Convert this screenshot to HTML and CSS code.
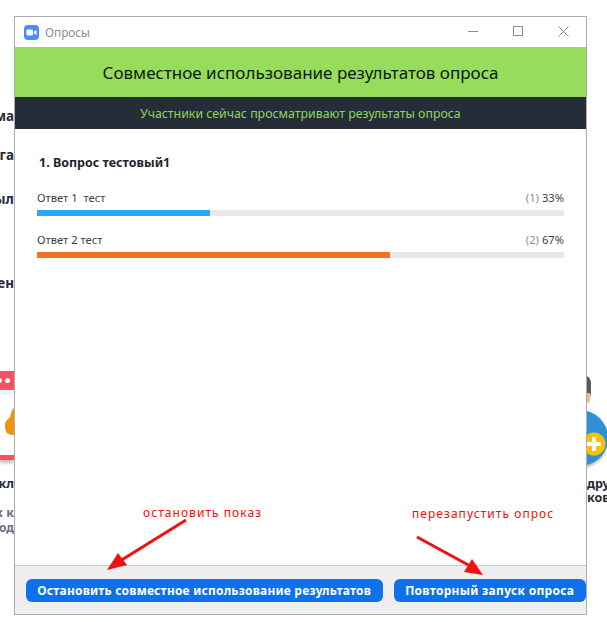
FILE: index.html
```html
<!DOCTYPE html>
<html lang="ru">
<head>
<meta charset="utf-8">
<title>Опросы</title>
<link rel="stylesheet" href="styles.css">
</head>
<body>
<div class="desktop">
  <div class="bg-text bt1">ма</div>
  <div class="bg-text bt2">га</div>
  <div class="bg-text bt3">ыл</div>
  <div class="bg-text bt4">ден</div>
  <div class="bg-card">
    <div class="bg-card-top"><i class="dot d1"></i><i class="dot d2"></i></div>
    <div class="bg-card-strip"></div>
    <svg class="bg-thumb" width="14" height="28" viewBox="0 0 14 28"><path d="M14 0C12 1 11 5 10 9C8 12 5 12 5 18C5 25 8 27 14 27z" fill="#f0930e"/></svg>
    <div class="bg-card-line"></div>
  </div>
  <div class="bg-text bt5">дкл</div>
  <div class="bg-text bt6">к к</div>
  <div class="bg-text bt7">лод</div>
  <div class="bg-head"></div>
  <div class="bg-neck"></div>
  <div class="bg-blue"></div>
  <div class="bg-plus">
    <svg width="24" height="24" viewBox="0 0 24 24"><circle cx="12" cy="12" r="11.500" fill="#f8c105"/><path d="M12 5v14M5 12h14" stroke="#fff" stroke-width="4"/></svg>
  </div>
  <div class="bg-text bt8">дру</div>
  <div class="bg-text bt9">ков</div>

  <section class="window">
    <header class="titlebar">
      <svg class="logo" width="15" height="15" viewBox="0 0 15 15"><rect width="15" height="15" rx="4" fill="#4a8cff"/><rect x="2.500" y="4.500" width="6.500" height="6" rx="1.300" fill="#fff"/><path d="M9.800 6.800l2.700-1.900v5.200l-2.700-1.900z" fill="#fff"/></svg>
      <span class="title">Опросы</span>
      <div class="controls">
        <svg width="10" height="10" viewBox="0 0 10 10"><path d="M0 5.500h10" stroke="#8c8c8c"/></svg>
        <svg width="10" height="10" viewBox="0 0 10 10"><rect x=".5" y=".5" width="9" height="9" fill="none" stroke="#8c8c8c"/></svg>
        <svg width="11" height="11" viewBox="0 0 11 11"><path d="M.5.500l10 10M10.500.500l-10 10" stroke="#8c8c8c"/></svg>
      </div>
    </header>
    <div class="banner">Совместное использование результатов опроса</div>
    <div class="notice">Участники сейчас просматривают результаты опроса</div>
    <main class="results">
      <h2 class="question">1. Вопрос тестовый1</h2>
      <div class="answer">
        <div class="answer-head"><span>Ответ 1&nbsp; тест</span><span><span class="count">(1)</span> 33%</span></div>
        <div class="track"><div class="fill fill-blue" style="width:32.800%"></div></div>
      </div>
      <div class="answer">
        <div class="answer-head"><span>Ответ 2 тест</span><span><span class="count">(2)</span> 67%</span></div>
        <div class="track"><div class="fill fill-orange" style="width:67%"></div></div>
      </div>
    </main>
    <footer class="footer">
      <button class="btn btn-stop">Остановить совместное использование результатов</button>
      <button class="btn btn-restart">Повторный запуск опроса</button>
    </footer>
  </section>

  <div class="note note1">остановить показ</div>
  <div class="note note2">перезапустить опрос</div>
  <svg class="arrows" width="607" height="622" viewBox="0 0 607 622">
    <path d="M186 520L120 561" stroke="#f01010" stroke-width="3"/>
    <path d="M107 570L118 553L127 565z" fill="#f01010"/>
    <path d="M417 537L472 567" stroke="#f01010" stroke-width="3"/>
    <path d="M483 575L464 572L472 559z" fill="#f01010"/>
  </svg>
</div>
</body>
</html>
```
FILE: styles.css
```css
html, body { margin: 0; padding: 0; background: #fff; }
.desktop { position: relative; width: 607px; height: 622px; overflow: hidden; font-family: "Noto Sans", "Open Sans", sans-serif; }

.bg-text { position: absolute; font-weight: 700; font-size: 13.500px; line-height: 14px; color: #2b2b33; white-space: nowrap; }
.bt1 { right: 593px; top: 109px; }
.bt2 { right: 593px; top: 148px; }
.bt3 { right: 593px; top: 192px; }
.bt4 { right: 593px; top: 276px; }
.bt5 { right: 593px; top: 477px; font-size: 12.500px; }
.bt6 { right: 593px; top: 506px; color: #70707c; font-size: 12.500px; }
.bt7 { right: 593px; top: 521px; color: #70707c; font-size: 12px; }
.bt8 { left: 587px; top: 477px; font-size: 12.500px; }
.bt9 { left: 587px; top: 491px; font-size: 12.500px; }

.bg-card { position: absolute; left: 0; top: 371px; width: 14px; height: 89px; box-shadow: 0 3px 3px rgba(0,0,0,.25); background: #fff; }
.bg-card-top { height: 19px; background: #fb5060; position: relative; }
.dot { position: absolute; top: 7px; width: 5px; height: 5px; border-radius: 50%; background: #fff; }
.d1 { left: -3px; }
.d2 { left: 5px; }
.bg-card-strip { height: 5px; background: #eef5fb; }
.bg-thumb { position: absolute; left: 0; top: 37px; }
.bg-card-line { position: absolute; left: 0; right: 0; bottom: 0; height: 5px; background: #f8505c; }
.bg-head { position: absolute; left: 580px; top: 375px; width: 11px; height: 26px; border-radius: 0 8px 8px 0; background: #5a5a5a; }
.bg-neck { position: absolute; left: 586px; top: 393px; width: 4px; height: 10px; border-radius: 0 0 3px 0; background: #e8c07a; }
.bg-blue { position: absolute; left: 552px; top: 410px; width: 56px; height: 56px; border-radius: 50%; background: #2e90d6; box-shadow: 0 2px 3px rgba(0,0,0,.3); }
.bg-plus { position: absolute; left: 582px; top: 432px; width: 24px; height: 24px; }

.window { position: absolute; left: 14px; top: 16px; width: 571px; height: 597px; border: 1px solid #adadad; background: #fff; display: flex; flex-direction: column; }
.titlebar { height: 30px; flex: none; display: flex; align-items: center; padding-left: 9px; background: #fff; }
.logo { flex: none; }
.title { margin-left: 6px; font-size: 11.800px; color: #8a8f99; }
.controls { margin-left: auto; display: flex; align-items: center; gap: 35px; padding: 0 17px 2px 0; }
.controls svg { display: block; }
.banner { height: 50px; flex: none; display: flex; align-items: center; justify-content: center; background: #97dc5a; color: #0e1a0a; font-size: 17px; }
.notice { height: 32px; flex: none; display: flex; align-items: center; justify-content: center; background: #252d38; color: #8fd757; font-size: 12.350px; }
.results { flex: 1; padding: 26px 22px 0 22px; }
.question { margin: 0 0 19px 2px; font-size: 12.500px; line-height: 16px; font-weight: 700; color: #23232d; }
.answer { margin-bottom: 16px; }
.answer-head { display: flex; justify-content: space-between; font-size: 11.200px; line-height: 16px; color: #3c3c46; margin-bottom: 4px; }
.count { color: #8a8a96; }
.track { height: 6px; background: #e8e8e8; }
.fill { height: 100%; }
.fill-blue { background: #2da5f8; }
.fill-orange { background: #f47023; }
.footer { height: 49px; flex: none; box-sizing: border-box; border-top: 1px solid #c8c8c8; background: #efefef; display: flex; align-items: flex-start; gap: 11px; padding: 13px 0 0 11px; }
.btn { height: 23px; border: 0; border-radius: 6px; padding: 0 1px 0 0; background: #0e71eb; color: #fff; font-family: inherit; font-weight: 700; font-size: 12px; letter-spacing: .21px; }
.btn-stop { width: 358px; }
.btn-restart { width: 192px; letter-spacing: .3px; }

.note { position: absolute; font-size: 12px; letter-spacing: 1.050px; color: #f80808; white-space: nowrap; }
.note1 { left: 143px; top: 504px; }
.note2 { left: 412px; top: 505px; }
.arrows { position: absolute; left: 0; top: 0; pointer-events: none; }
```
